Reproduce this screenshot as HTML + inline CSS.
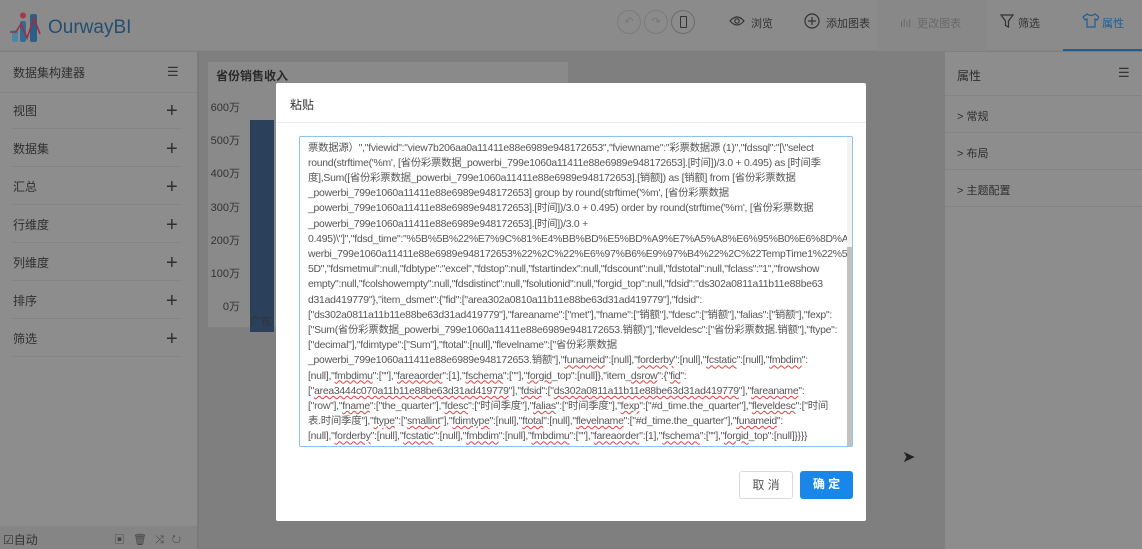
<!DOCTYPE html>
<html><head><meta charset="utf-8"><style>
*{margin:0;padding:0;box-sizing:border-box}
body{width:1142px;height:549px;overflow:hidden;background:#7f7f80;font-family:"Liberation Sans","Noto Sans CJK SC",sans-serif;position:relative;color:#333}
.abs{position:absolute}
.hdr{left:0;top:0;width:1142px;height:51px;background:#8b8b8b;border-bottom:1px solid #858585}
.left{left:0;top:52px;width:197px;height:497px;background:#8d8d8d}
.left .it{position:absolute;left:13px;font-size:12px;line-height:16px;color:#2f2f2f}
.left .pl{position:absolute;left:166px;font-size:20px;line-height:16px;color:#2f2f2f;font-weight:300}
.left .ln{position:absolute;left:12px;width:170px;height:1px;background:#858585}
.right{left:945px;top:52px;width:197px;height:497px;background:#8d8d8d}
.right .it{position:absolute;left:12px;font-size:11px;color:#2f2f2f}
.right .ln{position:absolute;left:0;width:197px;height:1px;background:#858585}
.modal{left:276px;top:83px;width:590px;height:438px;background:#fff;border-radius:2px}
.ta{left:23px;top:53px;width:554px;height:311px;border:1px solid #8ec2ef;overflow:hidden;border-radius:2px}
.ta .in{position:absolute;left:8px;top:-11.7px;font-size:10.4px;line-height:15.2px;color:#555;letter-spacing:-0.25px;white-space:pre}
.u{text-decoration:underline wavy #e04040;text-decoration-thickness:1px}
.btn{position:absolute;top:388px;height:28px;border-radius:3px;font-size:12px;text-align:center;line-height:26px}
</style></head><body>
<div class="abs hdr">
  <svg class="abs" style="left:10px;top:12px" width="36" height="30" viewBox="0 0 36 30">
    <rect x="2" y="18" width="6" height="12" rx="2" fill="#4b86a9"/>
    <circle cx="13" cy="3.5" r="3" fill="#a23a4a"/>
    <rect x="10" y="9" width="6" height="21" rx="2" fill="#2f6d98"/>
    <rect x="20" y="2" width="7" height="28" rx="2" fill="#2a5f8a"/>
    <polyline points="0,20 6,20 11,12 17,26 24,6 30,22" fill="none" stroke="#9a2f40" stroke-width="1.6"/>
  </svg>
  <div class="abs" style="left:48px;top:17px;font-size:19px;color:#244e73">OurwayBI</div>
  <div class="abs" style="left:617px;top:10px;width:24px;height:24px;border:1px solid #7c7c7c;border-radius:50%;font-size:11px;color:#777;text-align:center;line-height:22px">↶</div>
  <div class="abs" style="left:644px;top:10px;width:24px;height:24px;border:1px solid #7c7c7c;border-radius:50%;font-size:11px;color:#777;text-align:center;line-height:22px">↷</div>
  <div class="abs" style="left:671px;top:10px;width:24px;height:24px;border:1px solid #6c6c6c;border-radius:50%"><div class="abs" style="left:8px;top:5px;width:7px;height:12px;border:1.3px solid #333;border-radius:1px"></div></div>
  <svg class="abs" style="left:729px;top:15px" width="16" height="12" viewBox="0 0 16 12"><path d="M1 6Q8 -2 15 6Q8 14 1 6Z" fill="none" stroke="#333" stroke-width="1.2"/><circle cx="8" cy="6" r="2.2" fill="none" stroke="#333" stroke-width="1.2"/></svg>
  <div class="abs" style="left:751px;top:15px;font-size:11px;color:#333">浏览</div>
  <svg class="abs" style="left:804px;top:13px" width="16" height="16"><circle cx="8" cy="8" r="7" fill="none" stroke="#333" stroke-width="1.2"/><path d="M8 4v8M4 8h8" stroke="#333" stroke-width="1.2"/></svg>
  <div class="abs" style="left:826px;top:15px;font-size:11px;color:#333">添加图表</div>
  <div class="abs" style="left:877px;top:0;width:110px;height:51px;background:#888"></div>
  <div class="abs" style="left:900px;top:15px;font-size:11px;color:#6a6a6a">ılıl &nbsp;更改图表</div>
  <svg class="abs" style="left:1000px;top:14px" width="14" height="14"><path d="M1 1h12L8.5 7v6L5.5 11.5V7Z" fill="none" stroke="#333" stroke-width="1.2"/></svg>
  <div class="abs" style="left:1018px;top:15px;font-size:11px;color:#333">筛选</div>
  <svg class="abs" style="left:1082px;top:13px" width="17" height="15"><path d="M5 1L1 4l2 3 2-1v8h8V6l2 1 2-3-4-3Q9 4 5 1Z" fill="none" stroke="#1e5d93" stroke-width="1.2"/></svg>
  <div class="abs" style="left:1102px;top:15px;font-size:11px;color:#1e5d93">属性</div>
  <div class="abs" style="left:1063px;top:49px;width:79px;height:2px;background:#1e5d93"></div>
</div>
<div class="abs left">
  <div class="it" style="top:13px">数据集构建器</div>
  <div class="abs" style="left:167px;top:12px;font-size:13px;color:#333">☰</div>
  <div class="ln" style="top:40px;left:0;width:197px"></div>
  <div class="it" style="top:51px">视图</div><div class="pl" style="top:51px">+</div><div class="ln" style="top:76px"></div>
  <div class="it" style="top:89px">数据集</div><div class="pl" style="top:89px">+</div><div class="ln" style="top:114px"></div>
  <div class="it" style="top:127px">汇总</div><div class="pl" style="top:127px">+</div><div class="ln" style="top:152px"></div>
  <div class="it" style="top:165px">行维度</div><div class="pl" style="top:165px">+</div><div class="ln" style="top:190px"></div>
  <div class="it" style="top:203px">列维度</div><div class="pl" style="top:203px">+</div><div class="ln" style="top:228px"></div>
  <div class="it" style="top:241px">排序</div><div class="pl" style="top:241px">+</div><div class="ln" style="top:266px"></div>
  <div class="it" style="top:279px">筛选</div><div class="pl" style="top:279px">+</div><div class="ln" style="top:304px"></div>
  <div class="abs" style="left:0;top:474px;width:197px;height:23px;background:#858585"></div>
  <div class="abs" style="left:3px;top:479px;font-size:12px;color:#333">☑自动</div>
  <div class="abs" style="left:114px;top:479px;font-size:11px;color:#444;letter-spacing:8px">▣🗑⤨↻</div>
</div>
<div class="abs" style="left:197px;top:52px;width:2px;height:497px;background:#7a7a7a"></div>
<div class="abs" style="left:208px;top:62px;width:360px;height:265px;background:#8a8a8a">
  <div class="abs" style="left:8px;top:5px;font-size:12px;font-weight:bold;color:#2a2a2a">省份销售收入</div>
  <div class="abs" style="left:0;top:30px;width:32px;font-size:11px;color:#333;text-align:right;line-height:33.2px">600万<br>500万<br>400万<br>300万<br>200万<br>100万<br>0万</div>
  <div class="abs" style="left:42px;top:58px;width:24px;height:212px;background:#2b405a"></div>
  <div class="abs" style="left:42px;top:251px;font-size:11px;color:#333">广东</div>
</div>
<div class="abs right">
  <div class="it" style="top:15px;font-size:12px">属性</div>
  <div class="abs" style="left:173px;top:13px;font-size:13px;color:#333">☰</div>
  <div class="ln" style="top:43px"></div>
  <div class="it" style="top:56px">&gt; 常规</div><div class="ln" style="top:80px"></div>
  <div class="it" style="top:93px">&gt; 布局</div><div class="ln" style="top:117px"></div>
  <div class="it" style="top:130px">&gt; 主题配置</div><div class="ln" style="top:154px"></div>
</div>
<div class="abs modal">
  <div class="abs" style="left:14px;top:13px;font-size:12px;color:#333">粘贴</div>
  <div class="abs" style="left:0;top:39px;width:590px;height:1px;background:#e8ecf2"></div>
  <div class="abs ta">
<div class="in">"fdstype":"1","ftablename":"","fdescription":"","fclass":"1","ftype":"excel","fdsname":"彩票数据源","fvkey":"","fdsource":"(彩
票数据源）","fviewid":"view7b206aa0a11411e88e6989e948172653","fviewname":"彩票数据源 (1)","fdssql":"[\"select
round(strftime('%m', [省份彩票数据_powerbi_799e1060a11411e88e6989e948172653].[时间])/3.0 + 0.495) as [时间季
度],Sum([省份彩票数据_powerbi_799e1060a11411e88e6989e948172653].[销额]) as [销额] from [省份彩票数据
_powerbi_799e1060a11411e88e6989e948172653] group by round(strftime('%m', [省份彩票数据
_powerbi_799e1060a11411e88e6989e948172653].[时间])/3.0 + 0.495) order by round(strftime('%m', [省份彩票数据
_powerbi_799e1060a11411e88e6989e948172653].[时间])/3.0 +
0.495)\"]","fdsd_time":"%5B%5B%22%E7%9C%81%E4%BB%BD%E5%BD%A9%E7%A5%A8%E6%95%B0%E6%8D%AE_po
werbi_799e1060a11411e88e6989e948172653%22%2C%22%E6%97%B6%E9%97%B4%22%2C%22TempTime1%22%5D%
5D","fdsmetmul":null,"fdbtype":"excel","fdstop":null,"fstartindex":null,"fdscount":null,"fdstotal":null,"fclass":"1","frowshow
empty":null,"fcolshowempty":null,"fdsdistinct":null,"fsolutionid":null,"forgid_top":null,"fdsid":"ds302a0811a11b11e88be63
d31ad419779"},"item_dsmet":{"fid":["area302a0810a11b11e88be63d31ad419779"],"fdsid":
["ds302a0811a11b11e88be63d31ad419779"],"fareaname":["met"],"fname":["销额"],"fdesc":["销额"],"falias":["销额"],"fexp":
["Sum(省份彩票数据_powerbi_799e1060a11411e88e6989e948172653.销额)"],"fleveldesc":["省份彩票数据.销额"],"ftype":
["decimal"],"fdimtype":["Sum"],"ftotal":[null],"flevelname":["省份彩票数据
_powerbi_799e1060a11411e88e6989e948172653.销额"],"<span class="u">funameid</span>":[null],"<span class="u">forderby</span>":[null],"<span class="u">fcstatic</span>":[null],"<span class="u">fmbdim</span>":
[null],"<span class="u">fmbdimu</span>":[""],"<span class="u">fareaorder</span>":[1],"<span class="u">fschema</span>":[""],"<span class="u">forgid</span>_top":[null]},"item_<span class="u">dsrow</span>":{"<span class="u">fid</span>":
["<span class="u">area3444c070a11b11e88be63d31ad419779</span>"],"<span class="u">fdsid</span>":["<span class="u">ds302a0811a11b11e88be63d31ad419779</span>"],"<span class="u">fareaname</span>":
["row"],"<span class="u">fname</span>":["the_quarter"],"<span class="u">fdesc</span>":["时间季度"],"<span class="u">falias</span>":["时间季度"],"<span class="u">fexp</span>":["#d_time.the_quarter"],"<span class="u">fleveldesc</span>":["时间
表.时间季度"],"<span class="u">ftype</span>":["<span class="u">smallint</span>"],"<span class="u">fdimtype</span>":[null],"<span class="u">ftotal</span>":[null],"<span class="u">flevelname</span>":["#d_time.the_quarter"],"<span class="u">funameid</span>":
[null],"<span class="u">forderby</span>":[null],"<span class="u">fcstatic</span>":[null],"<span class="u">fmbdim</span>":[null],"<span class="u">fmbdimu</span>":[""],"<span class="u">fareaorder</span>":[1],"<span class="u">fschema</span>":[""],"<span class="u">forgid</span>_top":[null]}}}}</div>
    <div class="abs" style="right:0;top:0;width:5px;height:309px;background:#f4f4f4"></div>
    <div class="abs" style="right:0;top:110px;width:5px;height:199px;background:#c1c1c1"></div>
  </div>
  <div class="btn" style="left:463px;width:54px;border:1px solid #d9d9d9;color:#555">取 消</div>
  <div class="btn" style="left:524px;width:53px;background:#1a87e8;color:#fff;font-weight:bold">确 定</div>
</div>
<div class="abs" style="left:902px;top:447px;font-size:16px;color:#222">➤</div>
</body></html>
